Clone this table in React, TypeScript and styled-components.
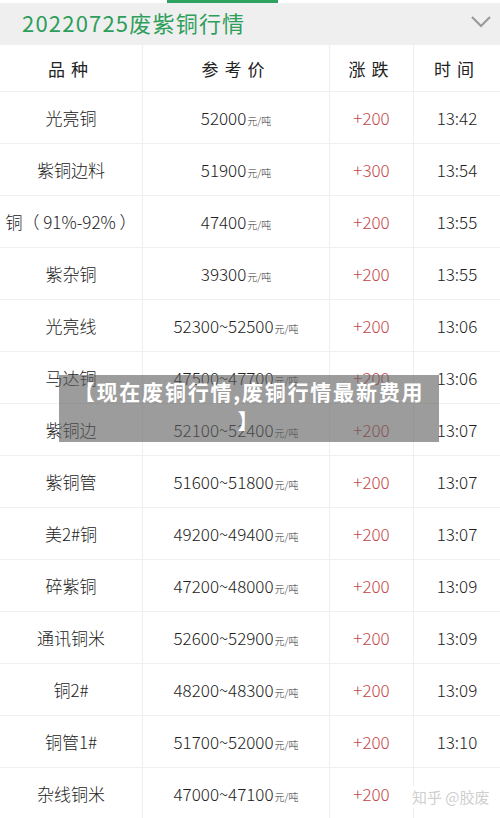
import { FC } from 'react';
import styled, { createGlobalStyle } from 'styled-components';

const GlobalStyle = createGlobalStyle`
  html, body {
    margin: 0;
    padding: 0;
    background: #fff;
  }
  body {
    font-family: "Noto Sans CJK SC", "Noto Sans", sans-serif;
  }
`;

const Page = styled.div`
  position: relative;
  width: 500px;
  height: 818px;
  overflow: hidden;
  background: #fff;
`;

const TopStrip = styled.div`
  height: 3px;
  background: #fff;
  display: flex;
  .indicator {
    margin-left: 167px;
    width: 111px;
    background: #2ea25f;
  }
`;

const TitleBar = styled.div`
  height: 42px;
  background: #efefef;
  display: flex;
  align-items: center;
  justify-content: space-between;
  padding: 0 8px 4px 22px;
  box-sizing: border-box;
  h1 {
    margin: 0;
    font-size: 22px;
    font-weight: 400;
    color: #2e9e5b;
    letter-spacing: 1.2px;
  }
`;

const Table = styled.div`
  display: grid;
  grid-template-columns: 143px 187px 84px 86px;
`;

const Cell = styled.div<{ $head?: boolean; $red?: boolean; $h: number }>`
  height: ${(p) => p.$h}px;
  display: flex;
  align-items: center;
  justify-content: center;
  white-space: nowrap;
  border-bottom: 1px solid #f0f0f0;
  border-right: 1px solid #eeeeee;
  box-sizing: border-box;
  font-size: 17px;
  font-weight: ${(p) => (p.$head ? 400 : 300)};
  color: ${(p) => (p.$red ? '#c4484a' : '#222')};
  letter-spacing: ${(p) => (p.$head ? '6px' : '0')};
  &:nth-child(4n) {
    border-right: 0;
  }
`;

const Unit = styled.span`
  font-size: 10px;
  margin-left: 1px;
  margin-top: 5px;
  color: #333;
`;

const Caption = styled.div`
  position: absolute;
  left: 59px;
  top: 375px;
  width: 380px;
  height: 67px;
  box-sizing: border-box;
  padding: 2px 10px 0;
  background: rgba(96, 96, 96, 0.62);
  color: #fff;
  font-size: 21px;
  font-weight: 700;
  line-height: 29px;
  letter-spacing: 1.8px;
  text-align: center;
`;

const Watermark = styled.div`
  position: absolute;
  left: 408px;
  top: 786px;
  white-space: nowrap;
  font-size: 15px;
  line-height: 22px;
  color: #cfcfcf;
  background: #fff;
  padding: 0 4px;
`;

const rows = [
  { name: '光亮铜', price: '52000', change: '+200', time: '13:42' },
  { name: '紫铜边料', price: '51900', change: '+300', time: '13:54' },
  { name: '铜（ 91%-92% ）', price: '47400', change: '+200', time: '13:55' },
  { name: '紫杂铜', price: '39300', change: '+200', time: '13:55' },
  { name: '光亮线', price: '52300~52500', change: '+200', time: '13:06' },
  { name: '马达铜', price: '47500~47700', change: '+200', time: '13:06' },
  { name: '紫铜边', price: '52100~52400', change: '+200', time: '13:07' },
  { name: '紫铜管', price: '51600~51800', change: '+200', time: '13:07' },
  { name: '美2#铜', price: '49200~49400', change: '+200', time: '13:07' },
  { name: '碎紫铜', price: '47200~48000', change: '+200', time: '13:09' },
  { name: '通讯铜米', price: '52600~52900', change: '+200', time: '13:09' },
  { name: '铜2#', price: '48200~48300', change: '+200', time: '13:09' },
  { name: '铜管1#', price: '51700~52000', change: '+200', time: '13:10' },
  { name: '杂线铜米', price: '47000~47100', change: '+200', time: '13:09' }
];

const Chevron: FC = () => (
  <svg width="22" height="14" viewBox="0 0 22 14">
    <path d="M2 2 L11 11 L20 2" fill="none" stroke="#9a9a9a" strokeWidth="2.2" />
  </svg>
);

const App: FC = () => {
  return (
    <Page>
      <GlobalStyle />
      <TopStrip>
        <div className="indicator" />
      </TopStrip>
      <TitleBar>
        <h1>20220725废紫铜行情</h1>
        <Chevron />
      </TitleBar>
      <Table>
        {['品种', '参考价', '涨跌', '时间'].map((h) => (
          <Cell key={h} $head $h={47}>
            {h}
          </Cell>
        ))}
        {rows.map((r, i) => [
          <Cell key={`n${i}`} $h={52}>{r.name}</Cell>,
          <Cell key={`p${i}`} $h={52}>
            {r.price}
            <Unit>元/吨</Unit>
          </Cell>,
          <Cell key={`c${i}`} $red $h={52}>{r.change}</Cell>,
          <Cell key={`t${i}`} $h={52}>{r.time}</Cell>
        ])}
      </Table>
      <Caption>
        【现在废铜行情,废铜行情最新费用
        <br />】
      </Caption>
      <Watermark>知乎 @胶废</Watermark>
    </Page>
  );
};

export default App;
